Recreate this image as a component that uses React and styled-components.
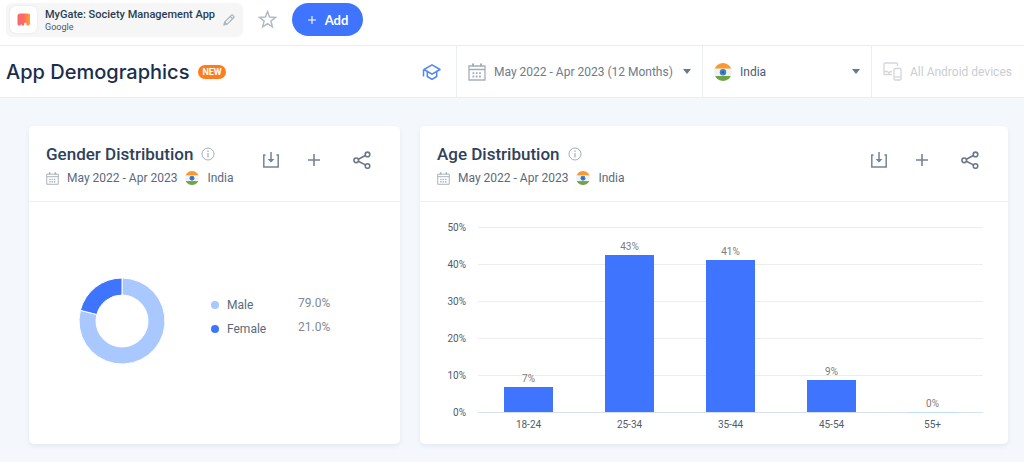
import styled, { createGlobalStyle } from "styled-components";

const genders = [
  { name: "Male", value: 79, color: "#a8c8ff" },
  { name: "Female", value: 21, color: "#3e74fe" },
];

const ages = [
  { range: "18-24", value: 6.8 },
  { range: "25-34", value: 42.5 },
  { range: "35-44", value: 41.1 },
  { range: "45-54", value: 8.7 },
  { range: "55+", value: 0 },
];

export default function App() {
  return (
    <>
      <GlobalStyle />
      <TopBar>
        <AppChip>
          <AppLogo>
            <LogoIcon />
          </AppLogo>
          <AppText>
            <AppName>MyGate: Society Management App</AppName>
            <StoreName>Google</StoreName>
          </AppText>
          <IconButton aria-label="Edit app">
            <PencilIcon />
          </IconButton>
        </AppChip>
        <IconButton aria-label="Add to favorites">
          <StarIcon />
        </IconButton>
        <AddButton>
          <svg width="10" height="10" viewBox="0 0 10 10" stroke="#fff" strokeWidth="1.1">
            <path d="M5 1v8M1 5h8" />
          </svg>
          Add
        </AddButton>
      </TopBar>
      <TitleBar>
        <PageTitle>App Demographics</PageTitle>
        <Badge>NEW</Badge>
        <Filters>
          <LearnLink href="#learn" aria-label="Learn more">
            <HatIcon />
          </LearnLink>
          <Filter $width={246}>
            <CalendarIcon size={18} />
            <Select aria-label="Date range" $muted>
              <option>May 2022 - Apr 2023 (12 Months)</option>
            </Select>
            <Caret />
          </Filter>
          <Filter $width={169}>
            <Flag size={18} />
            <Select aria-label="Country">
              <option>India</option>
            </Select>
            <Caret />
          </Filter>
          <Filter $width={153}>
            <DevicesIcon />
            <DeviceButton disabled>All Android devices</DeviceButton>
          </Filter>
        </Filters>
      </TitleBar>
      <Main>
        <Card>
          <CardHeader title="Gender Distribution" />
          <GenderBody>
            <Donut />
            <Legend>
              <tbody>
                {genders.map((g) => (
                  <tr key={g.name}>
                    <th scope="row">
                      <Dot $color={g.color} />
                      {g.name}
                    </th>
                    <td>{g.value.toFixed(1)}%</td>
                  </tr>
                ))}
              </tbody>
            </Legend>
          </GenderBody>
        </Card>
        <Card>
          <CardHeader title="Age Distribution" />
          <AgeChart />
        </Card>
      </Main>
    </>
  );
}

function CardHeader({ title }) {
  return (
    <Header>
      <div>
        <TitleRow>
          <CardTitle>{title}</CardTitle>
          <InfoIcon />
        </TitleRow>
        <SubRow>
          <CalendarIcon size={13} />
          <span>May 2022 - Apr 2023</span>
          <Flag size={14} />
          <span>India</span>
        </SubRow>
      </div>
      <Actions>
        <IconButton aria-label="Download">
          <DownloadIcon />
        </IconButton>
        <IconButton aria-label="Add to dashboard">
          <PlusIcon />
        </IconButton>
        <IconButton aria-label="Share">
          <ShareIcon />
        </IconButton>
      </Actions>
    </Header>
  );
}

function Donut() {
  const angle = (genders[0].value / 100) * 2 * Math.PI;
  const point = (r, a) => `${43 + r * Math.sin(a)} ${43 - r * Math.cos(a)}`;
  const slice = (from, to) =>
    `M${point(43, from)}A43 43 0 ${to - from > Math.PI ? 1 : 0} 1 ${point(43, to)}` +
    `L${point(26, to)}A26 26 0 ${to - from > Math.PI ? 1 : 0} 0 ${point(26, from)}Z`;
  return (
    <svg width="86" height="86" viewBox="0 0 86 86" stroke="#fff" role="img" aria-label="Gender split">
      <path d={slice(0, angle)} fill={genders[0].color} />
      <path d={slice(angle, 2 * Math.PI)} fill={genders[1].color} />
    </svg>
  );
}

function AgeChart() {
  const left = 58;
  const right = 563;
  const bottom = 210;
  const step = 37;
  const band = (right - left) / ages.length;
  return (
    <Chart viewBox="0 0 588 242" role="img" aria-label="Age distribution">
      {[0, 1, 2, 3, 4, 5].map((i) => (
        <g key={i}>
          <rect x={left} y={bottom - i * step} width={right - left} height="1" fill={i ? "#ebedef" : "#d5e0f0"} />
          <AxisText x="46" y={bottom - i * step + 4} textAnchor="end">
            {i * 10}%
          </AxisText>
        </g>
      ))}
      {ages.map((age, i) => {
        const center = left + band * (i + 0.5);
        const height = Math.round((age.value / 10) * step);
        return (
          <g key={age.range}>
            <rect x={center - 24.5} y={bottom - height} width="49" height={height || 1} fill={height ? "#3e74fe" : "#c0dcfb"} />
            <ValueText x={center} y={bottom - height - 5}>
              {Math.round(age.value)}%
            </ValueText>
            <AxisText x={center} y="226" textAnchor="middle">
              {age.range}
            </AxisText>
          </g>
        );
      })}
    </Chart>
  );
}

function LogoIcon() {
  return (
    <svg width="14" height="14" viewBox="0 0 14 14">
      <defs>
        <linearGradient id="logo">
          <stop offset="0.5" stopColor="#fa6a68" />
          <stop offset="0.9" stopColor="#ff9d2e" />
        </linearGradient>
      </defs>
      <path
        d="M3.200 .5H11.500a1.500 1.500 0 0 1 1.500 1.500V10.500a2 2 0 0 1-2 2H9.500V11a1.200 1.200 0 0 0-2.400 0v1.500H4.800V11.800a.6.6 0 0 0-1.200 0v.7H2A1.500 1.500 0 0 1 .5 11V3.200A2.700 2.700 0 0 1 3.200 .5Z"
        fill="url(#logo)"
      />
    </svg>
  );
}

function PencilIcon() {
  return (
    <svg width="12" height="12" viewBox="0 0 12 12" fill="none" stroke="#a9b1ba" strokeWidth="1.200">
      <path d="M1 11l.7-3L8.500 1.200a.8.8 0 0 1 1.200 0l1.100 1.100a.8.8 0 0 1 0 1.200L4 10.300zM7.300 2.500l2.200 2.200M1.700 8L4 10.300" />
    </svg>
  );
}

function StarIcon() {
  return (
    <svg width="19" height="19" viewBox="0 0 19 19" fill="none" stroke="#b3bac3" strokeWidth="1.500">
      <path d="M9.500 1.600l2.100 5.500 5.900.3-4.600 3.700 1.500 5.700-4.900-3.200-4.900 3.200 1.500-5.700L1.500 7.400l5.900-.3z" />
    </svg>
  );
}

function HatIcon() {
  return (
    <svg width="20" height="18" viewBox="0 0 20 18" fill="none" stroke="#5086f8" strokeWidth="1.500" strokeLinejoin="round">
      <path d="M10 1.800L18 6.500l-8 4.700-8-4.700zM5.300 8.700v4.800l4.700 2.800 4.700-2.800V8.700M1.500 6.700v6.800" />
    </svg>
  );
}

function CalendarIcon({ size }) {
  return (
    <svg width={size} height={size} viewBox="0 0 18 18" fill="none" stroke="#a5aeb8" strokeWidth="1.300">
      <path d="M1 3h16v14H1zM1 6.500h16" />
      <path d="M5 .5v3M13 .5v3" strokeWidth="2" />
      <path d="M4.500 10.200h9.500M4.500 13.500h9.500" strokeDasharray="1.800 1.500" strokeWidth="1.800" />
    </svg>
  );
}

function Flag({ size }) {
  return (
    <RoundSvg width={size} height={size} viewBox="0 0 18 18">
      <rect width="18" height="18" fill="#f1f2f3" />
      <rect width="18" height="5.500" fill="#fb982e" />
      <rect y="13" width="18" height="5" fill="#6fa345" />
      <circle cx="9" cy="9.300" r="3.200" fill="#3f7fc4" />
      <circle cx="9" cy="9.300" r="1" fill="#285b9f" />
    </RoundSvg>
  );
}

function DevicesIcon() {
  return (
    <svg width="19" height="19" viewBox="0 0 19 19" fill="none" stroke="#d3d7dc" strokeWidth="1.300">
      <path d="M14.500 4V2a1 1 0 0 0-1-1H2a1 1 0 0 0-1 1v10.500h8M1 9.500h3.500l1.500 1.500 1.500-1.500H9" />
      <rect x="11" y="6.500" width="7" height="11.500" rx="1.200" />
      <path d="M11 15h7" />
    </svg>
  );
}

function InfoIcon() {
  return (
    <svg width="14" height="14" viewBox="0 0 14 14" fill="none" stroke="#a5aeb8">
      <circle cx="7" cy="7" r="6" />
      <path d="M7 6v4.500M7 3.500v1.400" strokeWidth="1.200" />
    </svg>
  );
}

function DownloadIcon() {
  return (
    <svg width="18" height="18" viewBox="0 0 18 18" fill="none" stroke="#76839a" strokeWidth="1.500">
      <path d="M3.500 4H1.800v12h14.400V4H14.500M9 1v9.500" />
      <path d="M5.500 8h7L9 11.500z" fill="#76839a" stroke="none" />
    </svg>
  );
}

function PlusIcon() {
  return (
    <svg width="18" height="18" viewBox="0 0 18 18" stroke="#76839a" strokeWidth="1.600">
      <path d="M9 3v12M3 9h12" />
    </svg>
  );
}

function ShareIcon() {
  return (
    <svg width="18" height="18" viewBox="0 0 18 18" fill="none" stroke="#6b778c" strokeWidth="1.600">
      <circle cx="3.200" cy="9.300" r="2.300" />
      <circle cx="14.500" cy="3.400" r="2.300" />
      <circle cx="14.500" cy="15" r="2.300" />
      <path d="M5.300 8.300l7.100-3.800M5.300 10.300l7.100 3.600" />
    </svg>
  );
}

const GlobalStyle = createGlobalStyle`
  * {
    box-sizing: border-box;
  }
  body {
    margin: 0;
    min-height: 100vh;
    background: #f4f8fd;
    font-family: Roboto, sans-serif;
    color: #5a6a7d;
  }
  svg {
    display: block;
    flex-shrink: 0;
  }
`;

const TopBar = styled.header`
  display: flex;
  align-items: center;
  gap: 15px;
  height: 46px;
  padding: 0 6px 6px;
  background: #fff;
  border-bottom: 1px solid #eaecef;
`;

const AppChip = styled.div`
  display: flex;
  align-items: center;
  gap: 8px;
  height: 34px;
  padding: 0 8px 0 4px;
  border-radius: 6px;
  background: #f6f6f6;
`;

const AppLogo = styled.div`
  display: grid;
  place-items: center;
  width: 27px;
  height: 27px;
  border-radius: 6px;
  background: #fff;
  box-shadow: 0 0 2px #dcdfe3;
`;

const AppText = styled.div`
  display: flex;
  flex-direction: column;
`;

const AppName = styled.span`
  font-size: 11px;
  line-height: 15px;
  font-weight: 500;
  color: #2a3e52;
`;

const StoreName = styled.span`
  font-size: 9px;
  line-height: 10px;
  color: #4a5a6b;
`;

const IconButton = styled.button`
  display: grid;
  place-items: center;
  padding: 0;
  border: none;
  background: none;
  cursor: pointer;
`;

const AddButton = styled.button`
  display: flex;
  align-items: center;
  justify-content: center;
  gap: 8px;
  width: 71px;
  height: 33px;
  border: none;
  border-radius: 17px;
  background: #3e74fe;
  color: #fff;
  font-family: Lato, sans-serif;
  font-size: 13px;
  font-weight: 700;
  cursor: pointer;
`;

const TitleBar = styled.div`
  display: flex;
  align-items: center;
  height: 52px;
  padding-left: 6px;
  background: #fff;
  border-bottom: 1px solid #eaeff5;
`;

const PageTitle = styled.h1`
  margin: 0;
  font-family: Inter, sans-serif;
  font-size: 20px;
  line-height: 28px;
  font-weight: 500;
  color: #1a2e4c;
  white-space: nowrap;
`;

const Badge = styled.span`
  margin-left: 9px;
  padding: 0 4px;
  border-radius: 7px;
  background: #ff7c1c;
  color: #fff;
  font-size: 9px;
  line-height: 14px;
  font-weight: 700;
`;

const Filters = styled.div`
  display: flex;
  align-self: stretch;
  margin-left: auto;
`;

const LearnLink = styled.a`
  display: flex;
  align-items: center;
  padding: 0 14px;
`;

const Filter = styled.div`
  display: flex;
  align-items: center;
  gap: 8px;
  width: ${(props) => props.$width}px;
  padding: 0 11px;
  border-left: 1px solid #eceff2;
`;

const Select = styled.select`
  flex: 1;
  min-width: 0;
  padding: 0;
  border: none;
  appearance: none;
  background: none;
  font: 12px/18px Roboto, sans-serif;
  color: ${(props) => (props.$muted ? "#6e7b89" : "#4a5b70")};
`;

const Caret = styled.span`
  border: 4px solid transparent;
  border-top: 5px solid #6b788a;
  border-bottom: none;
`;

const DeviceButton = styled.button`
  padding: 0;
  border: none;
  background: none;
  font: 12px/18px Roboto, sans-serif;
  color: #c9ced4;
  white-space: nowrap;
`;

const RoundSvg = styled.svg`
  border-radius: 50%;
`;

const Main = styled.main`
  display: grid;
  grid-template-columns: 371fr 588fr;
  gap: 20px;
  padding: 28px 16px 18px 29px;
`;

const Card = styled.section`
  display: flex;
  flex-direction: column;
  min-width: 0;
  border-radius: 5px;
  background: #fff;
  box-shadow: 0 2px 4px #e3e8f0;
`;

const Header = styled.div`
  display: flex;
  justify-content: space-between;
  height: 76px;
  padding: 16px 29px 0 17px;
  border-bottom: 1px solid #eceef1;
`;

const TitleRow = styled.div`
  display: flex;
  align-items: center;
  gap: 8px;
`;

const CardTitle = styled.h2`
  margin: 0;
  font-size: 17px;
  line-height: 24px;
  font-weight: 500;
  color: #2f4258;
`;

const SubRow = styled.div`
  display: flex;
  align-items: center;
  gap: 8px;
  font-size: 12px;
  line-height: 24px;
`;

const Actions = styled.div`
  display: flex;
  align-items: flex-start;
  gap: 25px;
  padding-top: 9px;

  button:last-child {
    margin-left: 5px;
  }
`;

const GenderBody = styled.div`
  display: flex;
  flex: 1;
  align-items: center;
  gap: 46px;
  padding: 0 50px 4px;
`;

const Legend = styled.table`
  margin-bottom: 8px;
  border-collapse: collapse;
  font-size: 12px;
  line-height: 20px;

  th {
    display: flex;
    align-items: center;
    gap: 8px;
    width: 87px;
    height: 24px;
    padding: 0;
    font-weight: 400;
  }
  td {
    padding: 0 0 4px;
    color: #7d8995;
  }
`;

const Dot = styled.span`
  width: 8px;
  height: 8px;
  border-radius: 50%;
  background: ${(props) => props.$color};
`;

const Chart = styled.svg`
  width: 100%;
  height: auto;
`;

const AxisText = styled.text`
  font-size: 10px;
  fill: #4f5d6b;
`;

const ValueText = styled.text`
  font-size: 10px;
  text-anchor: middle;
  fill: #7c7c7c;
`;
